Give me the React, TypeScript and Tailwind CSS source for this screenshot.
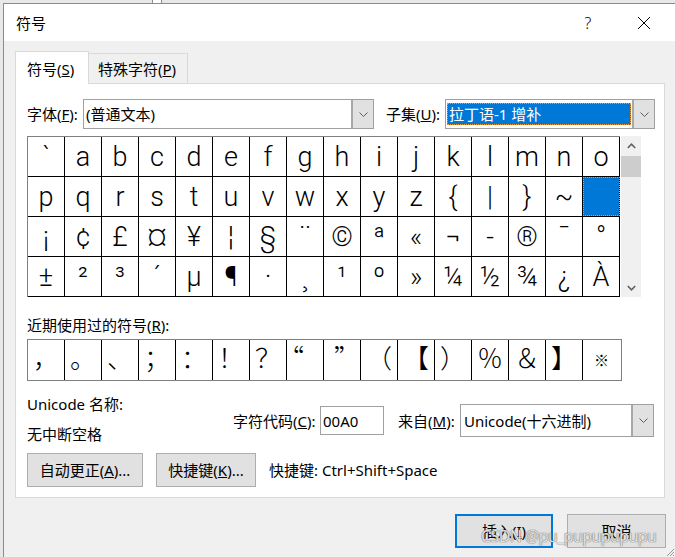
import React from "react";

const rows = [
  ["`", "a", "b", "c", "d", "e", "f", "g", "h", "i", "j", "k", "l", "m", "n", "o"],
  ["p", "q", "r", "s", "t", "u", "v", "w", "x", "y", "z", "{", "|", "}", "~", "\u00a0"],
  ["¡", "¢", "£", "¤", "¥", "¦", "§", "¨", "©", "ª", "«", "¬", "-", "®", "¯", "°"],
  ["±", "²", "³", "´", "µ", "¶", "·", "¸", "¹", "º", "»", "¼", "½", "¾", "¿", "À"],
];

const recent = ["，", "。", "、", "；", "：", "！", "？", "“", "”", "（", "【", "）", "％", "＆", "】", "※"];

// small per-glyph nudges so the quotes and reference mark sit where Word draws them
const recentExtra: Record<number, string> = {
  7: "pr-[28px]",
  8: "pl-[10px]",
  15: "items-center text-[15px]",
};

function Chevron() {
  return (
    <svg width="9" height="5" viewBox="0 0 9 5">
      <path d="M0.5 0.5 L4.5 4.5 L8.5 0.5" fill="none" stroke="#606060" strokeWidth="1" />
    </svg>
  );
}

function Combo({ width, height, children }: { width: string; height: string; children: React.ReactNode }) {
  return (
    <div className={`flex ${width} ${height} border border-[#a0a0a0] bg-white`}>
      <div className="flex min-w-0 flex-1 items-center">{children}</div>
      <div className="flex w-[22px] items-center justify-center border-l-2 border-[#a8a8a8] bg-[#e1e1e1]">
        <Chevron />
      </div>
    </div>
  );
}

function SymbolGrid() {
  return (
    <div className="mt-[7px] flex">
      <div className="w-[593px] border-l border-t border-[#808080] font-['Roboto','Inter',sans-serif] text-[27px] font-light leading-[40px]">
        {rows.map((row, r) => (
          <div key={r} className="flex h-[40px] border-b border-black">
            {row.map((ch, c) => {
              const selected = r === 1 && c === 15;
              return (
                <div
                  key={c}
                  className={`flex w-[37px] justify-center border-r border-black ${
                    selected ? "bg-[#0078d7] outline-1 -outline-offset-1 outline-dotted outline-[#f29a3c]" : ""
                  }`}
                >
                  {ch}
                </div>
              );
            })}
          </div>
        ))}
      </div>
      {/* scrollbar */}
      <div className="ml-px flex h-[161px] w-[20px] flex-col bg-[#f0f0f0]">
        <div className="flex h-[20px] items-center justify-center">
          <svg width="9" height="6" viewBox="0 0 9 6">
            <path d="M0.8 5 L4.5 1.2 L8.2 5" fill="none" stroke="#606060" strokeWidth="1.6" />
          </svg>
        </div>
        <div className="h-[21px] bg-[#cdcdcd]" />
        <div className="flex-1" />
        <div className="flex h-[18px] items-center justify-center">
          <svg width="9" height="6" viewBox="0 0 9 6">
            <path d="M0.8 1 L4.5 4.8 L8.2 1" fill="none" stroke="#606060" strokeWidth="1.6" />
          </svg>
        </div>
      </div>
    </div>
  );
}

function RecentRow() {
  return (
    <div className="mt-[4px] flex h-[42px] w-[595px] border border-[#808080] font-['Noto_Sans_CJK_SC',sans-serif] text-[26px] font-light leading-[34px]">
      {recent.map((ch, i) => (
        <div
          key={i}
          className={`flex w-[37px] justify-center ${i < 15 ? "border-r border-black" : ""} ${recentExtra[i] ?? ""}`}
        >
          {ch}
        </div>
      ))}
    </div>
  );
}

export default function App() {
  return (
    <div className="relative flex h-[557px] w-[675px] flex-col overflow-hidden bg-[#e8e8e8] font-['Noto_Sans','Noto_Sans_CJK_SC',sans-serif] text-[15px] leading-[20px] text-black">
      <div className="flex h-[3px] shrink-0">
        <div className="ml-[152px] w-[10px] border-x border-[#8c8c8c] bg-white" />
      </div>
      <div className="flex flex-1">
        <div className="w-[3px] shrink-0" />
        <div className="flex flex-1 flex-col border-l border-t border-[#8c8c8c]">
          {/* title bar */}
          <div className="flex h-[37px] shrink-0 items-center bg-white pl-[12px]">
            <span>符号</span>
            <div className="ml-auto flex items-center pr-[8px]">
              <div className="flex w-[46px] justify-center text-[16px] font-light">?</div>
              <div className="ml-[10px] flex w-[46px] justify-center">
                <svg width="14" height="14" viewBox="0 0 14 14">
                  <path d="M1 1 L13 13 M13 1 L1 13" stroke="#000" strokeWidth="1" />
                </svg>
              </div>
            </div>
          </div>

          {/* body */}
          <div className="flex-1 bg-[#f0f0f0] pl-[11px] pt-[10px]">
            <div className="flex h-[32px] items-end">
              <div className="relative z-10 -mb-px flex h-[33px] w-[74px] items-center border-x border-t border-[#d9d9d9] bg-white pl-[11px] pt-[2px]">
                符号(<u>S</u>)
              </div>
              <div className="flex h-[30px] w-[99px] items-center border-r border-t border-[#d9d9d9] pl-[9px] pt-[1px]">
                特殊字符(<u>P</u>)
              </div>
            </div>

            <div className="h-[415px] w-[650px] border border-[#d9d9d9] bg-white pl-[11px] pt-[15px]">
              {/* font / subset */}
              <div className="flex h-[30px] items-center">
                <span className="w-[56px]">
                  字体(<u>F</u>):
                </span>
                <Combo width="w-[291px]" height="h-[30px]">
                  <span className="pl-[2px]">(普通文本)</span>
                </Combo>
                <span className="ml-[12px] w-[59px]">
                  子集(<u>U</u>):
                </span>
                <Combo width="w-[210px]" height="h-[30px]">
                  <div className="ml-px mr-px flex h-[22px] flex-1 items-center bg-[#0078d7] pl-[2px] text-white outline-1 -outline-offset-1 outline-dotted outline-[#f29a3c]">
                    拉丁语-1 增补
                  </div>
                </Combo>
              </div>

              <SymbolGrid />

              <div className="mt-[18px]">
                近期使用过的符号(<u>R</u>):
              </div>
              <RecentRow />

              {/* unicode info */}
              <div className="mt-[13px] flex">
                <div className="w-[206px]">
                  <div className="h-[20px]">Unicode 名称:</div>
                  <div className="mt-[10px] h-[20px]">无中断空格</div>
                </div>
                <div className="mt-[10px] flex h-[33px] items-center">
                  <span className="w-[87px]">
                    字符代码(<u>C</u>):
                  </span>
                  <div className="flex h-[29px] w-[64px] items-center border border-[#a0a0a0] pl-[2px]">00A0</div>
                  <span className="ml-[14px] w-[62px]">
                    来自(<u>M</u>):
                  </span>
                  <Combo width="w-[194px]" height="h-[33px]">
                    <span className="pl-[3px]">Unicode(十六进制)</span>
                  </Combo>
                </div>
              </div>

              <div className="mt-[9px] flex items-center">
                <button className="h-[34px] w-[116px] border border-[#adadad] bg-[#e1e1e1]">
                  自动更正(<u>A</u>)...
                </button>
                <button className="ml-[13px] h-[34px] w-[100px] border border-[#adadad] bg-[#e1e1e1]">
                  快捷键(<u>K</u>)...
                </button>
                <span className="ml-[13px]">快捷键: Ctrl+Shift+Space</span>
              </div>
            </div>

            <div className="mt-[16px] flex w-[651px] justify-end gap-[14px]">
              <button className="h-[34px] w-[98px] border-2 border-[#0078d7] bg-[#e1e1e1]">
                插入(<u>I</u>)
              </button>
              <button className="h-[34px] w-[99px] border border-[#adadad] bg-[#e1e1e1]">取消</button>
            </div>
          </div>
        </div>
      </div>

      {/* watermark */}
      <div className="pointer-events-none absolute left-[481px] top-[526px] whitespace-nowrap text-[16px] tracking-[-0.6px] text-white/80 [text-shadow:0_0_1px_#666,0_0_1px_#666]">
        CSDN @pu_pupupupupu
      </div>

      {/* resize grip */}
      <svg className="absolute bottom-0 right-0" width="10" height="10" viewBox="0 0 10 10">
        <path d="M9 2 L2 9 M9 5 L5 9 M9 8 L8 9" stroke="#9a9a9a" strokeWidth="1" />
      </svg>
    </div>
  );
}
